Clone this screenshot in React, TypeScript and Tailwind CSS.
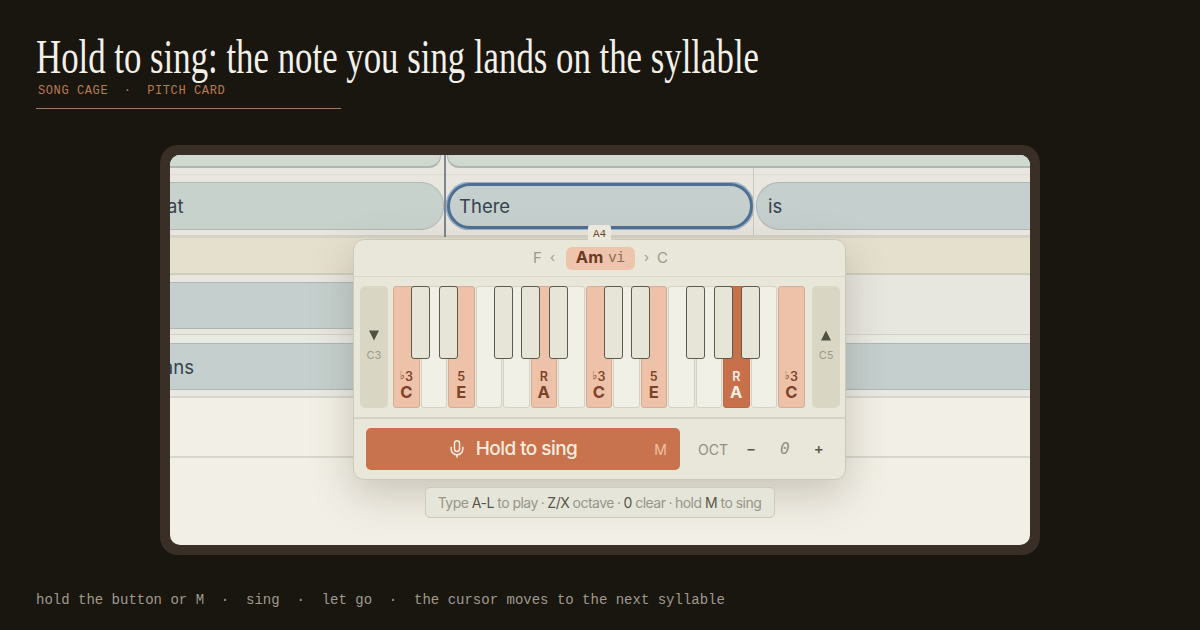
import { Mic } from "lucide-react";

const WHITE_KEYS = [
  { tone: "C", degree: "3", flat: true, state: "scale" },
  { state: "off" },
  { tone: "E", degree: "5", state: "scale" },
  { state: "off" },
  { state: "off" },
  { tone: "A", degree: "R", state: "scale" },
  { state: "off" },
  { tone: "C", degree: "3", flat: true, state: "scale" },
  { state: "off" },
  { tone: "E", degree: "5", state: "scale" },
  { state: "off" },
  { state: "off" },
  { tone: "A", degree: "R", state: "active" },
  { state: "off" },
  { tone: "C", degree: "3", flat: true, state: "scale" },
];

// white key boundaries that carry a black key
const BLACK_KEYS = [1, 2, 4, 5, 6, 8, 9, 11, 12, 13];
const KEY_PITCH = 27.5;

function WhiteKey({ tone, degree, flat, state }: { tone?: string; degree?: string; flat?: boolean; state: string }) {
  const look =
    state === "active"
      ? "bg-[#c8704a] text-[#f7efe3] border-[#b9694a]"
      : state === "scale"
        ? "bg-[#eec1a9] text-[#7c432a] border-[#d3ad98]"
        : "bg-[#f1f0e6] text-[#7c432a] border-[#d3d2c4]";
  return (
    <div className={`flex h-[122px] w-[26.5px] shrink-0 flex-col items-center justify-end rounded-[3px] border pb-[6px] ${look}`}>
      {tone && (
        <>
          <span className="flex items-start text-[12.5px] font-semibold leading-[13px] font-['Inter',sans-serif]">
            {flat && <span className="text-[11px] leading-[11px] font-['DejaVu_Sans',sans-serif]">♭</span>}
            {degree}
          </span>
          <span className="mt-0 text-[16.5px] font-bold leading-[18px] font-['Inter',sans-serif]">{tone}</span>
        </>
      )}
    </div>
  );
}

function OctaveButton({ down, label }: { down?: boolean; label: string }) {
  return (
    <div className="flex h-[122px] w-[28px] shrink-0 flex-col items-center justify-center rounded-[5px] bg-[#d9d7c3] pb-[3px]">
      <svg width="12" height="11" viewBox="0 0 12 11">
        <polygon points={down ? "1,0.5 11,0.5 6,10.5" : "6,0.5 11,10.5 1,10.5"} fill="#4f5240" />
      </svg>
      <span className="mt-[8px] text-[11px] leading-[13px] text-[#9a9b88] font-['Inter',sans-serif]">{label}</span>
    </div>
  );
}

export default function App() {
  return (
    <div className="flex h-[630px] w-[1200px] flex-col overflow-hidden bg-[#19150f]">
      {/* Title block */}
      <div className="px-9 pt-[32px]">
        <h1 className="h-[50px] origin-left scale-x-[0.725] whitespace-nowrap text-[48px] leading-[50px] text-[#f3f0e8] font-['Liberation_Serif',serif]">
          Hold to sing: the note you sing lands on the syllable
        </h1>
        <p className="mt-[2px] w-[305px] border-b border-[#a07a63] pb-[9px] pl-[2px] text-[12px] leading-[15px] tracking-[0.6px] whitespace-pre text-[#bd7a52] font-['Liberation_Mono',monospace]">
          {"SONG CAGE  ·  PITCH CARD"}
        </p>
      </div>

      {/* Framed screen */}
      <div className="mx-auto mt-[36px] h-[410px] w-[880px] rounded-[18px] bg-[#3a2f27] p-[10px]">
        <div className="relative h-[390px] w-[860px] overflow-hidden rounded-[10px] bg-[#f2efe6] font-['Inter',sans-serif]">
          {/* Top lyric track */}
          <div className="flex h-[13px] gap-[6px] bg-[#e8e6df]">
            <div className="h-[13px] w-[271px] rounded-br-[12px] border-r border-b-2 border-[#aeb6b1] bg-[#cfd9cf]" />
            <div className="h-[13px] flex-1 rounded-bl-[12px] border-b-2 border-l border-[#aeb6b1] bg-[#cfd9cf]" />
          </div>
          <div className="h-[70px] border-b-[3px] border-[#d5d3c6] bg-[#e8e6df]">
            <div className="h-[7px] border-b border-[#dedbce]" />
            <div className="mt-[7px] flex h-[48px] items-stretch gap-[3px] overflow-hidden">
              <div className="ml-[-60px] flex w-[334px] shrink-0 items-center rounded-[23px] border-[1.5px] border-[#aeb7b5] bg-[#c8d2cc] pt-[2px] pl-[39px] text-[18.5px] text-[#36424d]">
                that
              </div>
              <div className="my-[1px] flex w-[306px] shrink-0 items-center rounded-[23px] border-[3px] border-[#4e6f94] bg-[#c5cfcd] pt-[2px] pl-[9px] text-[18.5px] text-[#36424d] shadow-[0_0_0_1.5px_#9db0c2]">
                There
              </div>
              <div className="flex flex-1 items-center rounded-l-[23px] border-y-[1.5px] border-l-[1.5px] border-[#aeb7b5] bg-[#c5cfcd] pt-[2px] pl-[11px] text-[18.5px] text-[#36424d]">
                is
              </div>
            </div>
          </div>

          {/* Chord band */}
          <div className="h-[37px] border-b-2 border-[#cfcec0] bg-[#e5dfcd]" />

          {/* Lower lyric track */}
          <div className="h-[60px] border-b border-[#d3d1c6] bg-[#e7e6df] pt-[7px]">
            <div className="h-[47px] w-[190px] border-y-[1.5px] border-[#aeb7b5] bg-[#c5cfcd]" />
          </div>
          <div className="h-[63px] border-b-2 border-[#d8d7cc] bg-[#e9e9e3] pt-[8px]">
            <div className="flex h-[47px] items-center border-y-[1.5px] border-[#aeb7b5] bg-[#c5cfcd] pt-[2px] text-[18.5px] text-[#36424d]">
              <span className="ml-[-23px]">plans</span>
            </div>
          </div>

          {/* Empty track */}
          <div className="h-[60px] border-b-2 border-[#d8d7ce] bg-[#f2efe6]" />

          {/* Cursor lines */}
          <div className="absolute top-0 left-[274px] h-[82px] w-[2px] bg-[#7b8792]" />
          <div className="absolute top-[13px] left-[583px] h-[68px] w-px bg-[#cbcac1]" />

          {/* Pitch card */}
          <div className="absolute top-[70px] left-[183px] flex w-[493px] flex-col items-center">
            <div className="z-10 mb-[-1px] flex h-[15px] w-[23px] items-center justify-center rounded-t-[3px] bg-[#ece9dc] pt-[3px] text-[11px] text-[#6b4a38] font-['Liberation_Mono',monospace]">
              A4
            </div>
            <div className="h-[241px] w-[493px] rounded-[11px] border-[1.5px] border-[#cbcaba] bg-[#e9e7d9] shadow-[0_14px_40px_rgba(80,75,55,0.26)]">
              {/* Chord picker */}
              <div className="flex h-[37px] items-center justify-center border-b border-[#d8d6c7] pl-[2px]">
                <span className="text-[15px] text-[#9a9a8b]">F</span>
                <span className="ml-[8px] text-[13px] text-[#9a9a8b]">‹</span>
                <div className="ml-[11px] flex h-[23px] w-[69px] items-center justify-center gap-[5px] rounded-[6px] bg-[#efc4ad]">
                  <span className="mb-[2px] text-[16.5px] leading-[20px] font-bold text-[#6b3a22]">Am</span>
                  <span className="text-[14px] leading-[20px] text-[#8a6a55] font-['Liberation_Mono',monospace]">vi</span>
                </div>
                <span className="ml-[9px] text-[13px] text-[#9a9a8b]">›</span>
                <span className="ml-[8px] text-[15px] text-[#9a9a8b]">C</span>
              </div>

              {/* Keyboard */}
              <div className="flex h-[142px] items-start gap-[5px] border-b-2 border-[#d4d3c4] pt-[9px] pr-[5px] pl-[6px]">
                <OctaveButton down label="C3" />
                <div className="relative flex flex-1 gap-px">
                  {WHITE_KEYS.map((key, i) => (
                    <WhiteKey key={i} {...key} />
                  ))}
                  {BLACK_KEYS.map((n) => (
                    <div
                      key={n}
                      className="absolute top-0 h-[73px] w-[19px] rounded-[3px] border border-[#5c5a4c] bg-[#e7e5d8]"
                      style={{ left: n * KEY_PITCH - 9.5 }}
                    />
                  ))}
                </div>
                <OctaveButton label="C5" />
              </div>

              {/* Sing controls */}
              <div className="flex items-center pt-[9px] pl-[12px]">
                <div className="relative flex h-[42px] w-[314px] items-center justify-center gap-[9px] rounded-[5px] bg-[#c8734d] pr-[22px] text-[#f8ecdf]">
                  <Mic className="h-[20px] w-[20px]" strokeWidth={1.8} />
                  <span className="text-[19px] font-medium tracking-[-0.55px]">Hold to sing</span>
                  <span className="absolute right-[13px] text-[14px] text-[#efc0a4]">M</span>
                </div>
                <span className="ml-[18px] text-[14px] text-[#8e8e80]">OCT</span>
                <span className="ml-[18px] text-[15px] font-medium text-[#56564a]">−</span>
                <span className="ml-[24px] text-[16px] italic text-[#8e8e80] font-['DejaVu_Sans_Mono',monospace]">0</span>
                <span className="ml-[24px] text-[15px] font-medium text-[#56564a]">+</span>
              </div>
            </div>

            {/* Keyboard hints */}
            <div className="mt-[7px] flex h-[31px] w-[350px] items-center justify-center rounded-[5px] border-[1.5px] border-[#cbcabb] bg-[#e6e5d9] text-[14px] tracking-[-0.52px] whitespace-nowrap text-[#96968a]">
              <span>
                Type <span className="text-[#56564a]">A-L</span> to play<span className="mx-[3px]">·</span>
                <span className="text-[#56564a]">Z/X</span> octave<span className="mx-[3px]">·</span>
                <span className="text-[#56564a]">0</span> clear<span className="mx-[3px]">·</span>hold{" "}
                <span className="text-[#56564a]">M</span> to sing
              </span>
            </div>
          </div>
        </div>
      </div>

      {/* Caption */}
      <p className="mt-[37px] px-9 text-[14px] leading-[17px] whitespace-pre text-[#a09a8d] font-['Liberation_Mono',monospace]">
        {"hold the button or M  ·  sing  ·  let go  ·  the cursor moves to the next syllable"}
      </p>
    </div>
  );
}
